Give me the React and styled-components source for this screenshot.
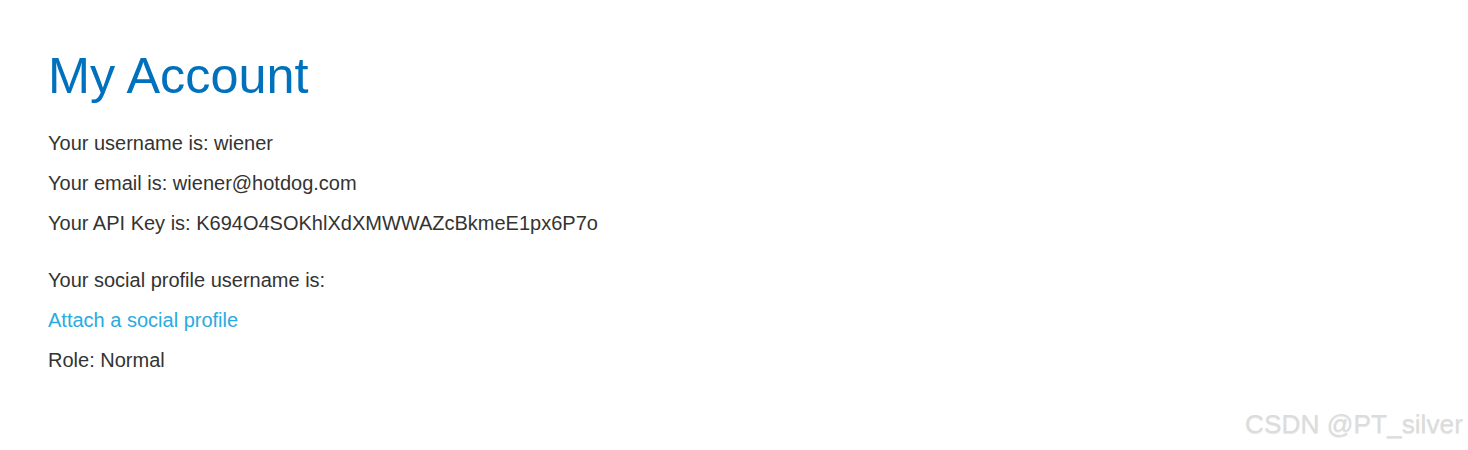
import React from "react";
import styled, { createGlobalStyle } from "styled-components";

const GlobalStyle = createGlobalStyle`
  html, body {
    margin: 0;
    padding: 0;
    background: #ffffff;
  }
  body {
    font-family: "Liberation Sans", Arial, sans-serif;
  }
`;

const Page = styled.main`
  position: relative;
  width: 1468px;
  height: 450px;
  box-sizing: border-box;
  padding: 47px 48px 0;
  display: flex;
  flex-direction: column;
  overflow: hidden;
`;

const Title = styled.h1`
  margin: 0 0 18px;
  font-size: 50.4px;
  line-height: 58px;
  font-weight: 400;
  color: #0071bc;
`;

const Group = styled.section`
  display: flex;
  flex-direction: column;
  margin-bottom: ${(p) => p.$gap || 0}px;
`;

const Line = styled.p`
  margin: 0;
  font-size: 20px;
  line-height: 40px;
  color: #333332;
`;

const Link = styled.a`
  font-size: 20px;
  line-height: 40px;
  color: #29abe2;
  text-decoration: none;
  cursor: pointer;
`;

const Watermark = styled.div`
  position: absolute;
  right: 5px;
  bottom: 10px;
  font-size: 26.3px;
  color: #dcdcdc;
  text-shadow: 0 1px 1px rgba(0, 0, 0, 0.1);
`;

export default function App() {
  return (
    <>
      <GlobalStyle />
      <Page>
        <Title>My Account</Title>
        <Group $gap={17}>
          <Line>Your username is: wiener</Line>
          <Line>Your email is: wiener@hotdog.com</Line>
          <Line>Your API Key is: K694O4SOKhlXdXMWWAZcBkmeE1px6P7o</Line>
        </Group>
        <Group>
          <Line>Your social profile username is:</Line>
          <Line>
            <Link>Attach a social profile</Link>
          </Line>
          <Line>Role: Normal</Line>
        </Group>
        <Watermark>CSDN @PT_silver</Watermark>
      </Page>
    </>
  );
}
